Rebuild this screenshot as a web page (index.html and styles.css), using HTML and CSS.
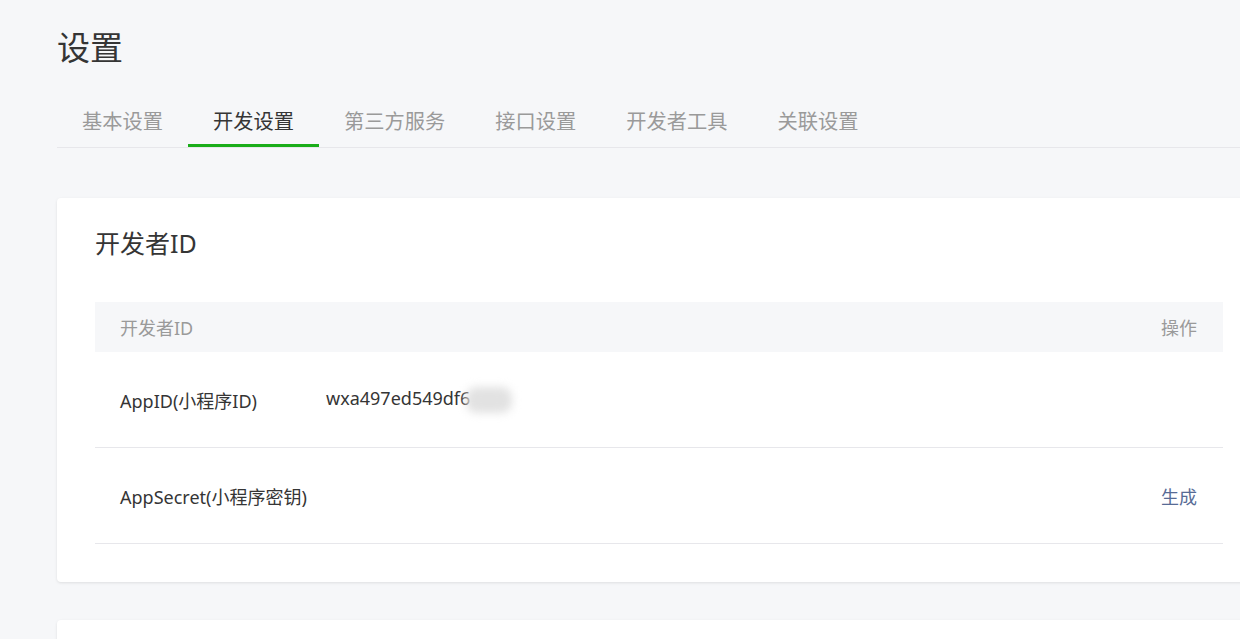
FILE: index.html
```html
<!DOCTYPE html>
<html lang="zh-CN">
<head>
<meta charset="utf-8">
<title>设置</title>
<link rel="stylesheet" href="styles.css">
</head>
<body>
<div class="page">
  <h1 class="page-title">设置</h1>
  <nav class="tabs">
    <a class="tab">基本设置</a>
    <a class="tab active">开发设置</a>
    <a class="tab">第三方服务</a>
    <a class="tab">接口设置</a>
    <a class="tab">开发者工具</a>
    <a class="tab">关联设置</a>
  </nav>
  <section class="card">
    <h2 class="card-title">开发者ID</h2>
    <div class="table">
      <div class="row head">
        <div class="cell label">开发者ID</div>
        <div class="cell value"></div>
        <div class="cell op">操作</div>
      </div>
      <div class="row">
        <div class="cell label">AppID(小程序ID)</div>
        <div class="cell value">wxa497ed549df6<span class="masked"></span></div>
        <div class="cell op"></div>
      </div>
      <div class="row">
        <div class="cell label">AppSecret(小程序密钥)</div>
        <div class="cell value"></div>
        <div class="cell op"><a class="link">生成</a></div>
      </div>
    </div>
  </section>
  <section class="card next"></section>
</div>
</body>
</html>
```

FILE: styles.css
```css
html, body {
  margin: 0;
  padding: 0;
  background: #f6f7f9;
  overflow: hidden;
  height: 100%;
}
body {
  font-family: "Noto Sans", "Noto Sans CJK SC", sans-serif;
  color: #353535;
}
.page {
  width: 1204px;
  padding: 28px 0 0 57px;
}
.page-title {
  margin: 0;
  font-size: 33px;
  line-height: 40px;
  font-weight: normal;
  color: #353535;
}
.tabs {
  display: flex;
  margin-top: 39px;
  border-bottom: 1px solid #e7e7eb;
}
.tab {
  padding: 0 25px 9px;
  font-size: 20.25px;
  line-height: 28px;
  color: #9a9a9a;
  border-bottom: 3px solid transparent;
  cursor: pointer;
}
.tab.active {
  color: #353535;
  border-bottom-color: #1aad19;
}
.card {
  margin-top: 50px;
  background: #fff;
  border-radius: 4px;
  box-shadow: 0 1px 3px rgba(0, 0, 0, 0.1);
  padding: 29px 38px 38px;
}
.card-title {
  margin: 0 0 43px;
  font-size: 25px;
  line-height: 32px;
  font-weight: normal;
  color: #353535;
}
.row {
  display: grid;
  grid-template-columns: 231px 1fr auto;
  align-items: center;
  height: 95px;
  border-bottom: 1px solid #e7e7eb;
  font-size: 18px;
  color: #353535;
}
.row.head {
  height: 50px;
  background: #f6f7f9;
  border-bottom: none;
  color: #9a9a9a;
}
.cell.label {
  padding-left: 25px;
}
.cell.op {
  padding-right: 26px;
  text-align: right;
}
.masked {
  display: inline-block;
  width: 46px;
  height: 26px;
  margin-left: -4px;
  vertical-align: middle;
  background: #e2e2e2;
  border-radius: 10px;
  filter: blur(4px);
}
.link {
  color: #576b95;
  cursor: pointer;
}
.card.next {
  margin-top: 38px;
  height: 60px;
  padding: 0;
}
```
